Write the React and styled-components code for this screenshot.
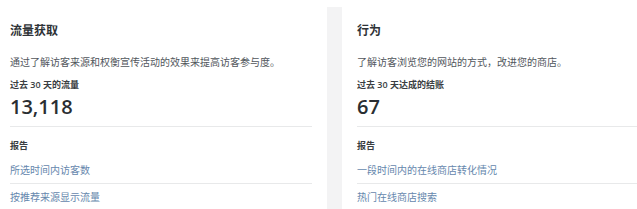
import React from "react";
import styled, { createGlobalStyle } from "styled-components";

const cards = [
  {
    title: "流量获取",
    description: "通过了解访客来源和权衡宣传活动的效果来提高访客参与度。",
    metricLabel: "过去 30 天的流量",
    metric: "13,118",
    reports: ["所选时间内访客数", "按推荐来源显示流量"],
  },
  {
    title: "行为",
    description: "了解访客浏览您的网站的方式，改进您的商店。",
    metricLabel: "过去 30 天达成的结账",
    metric: "67",
    reports: ["一段时间内的在线商店转化情况", "热门在线商店搜索"],
  },
];

const GlobalStyle = createGlobalStyle`
  body {
    margin: 0;
    background: #ffffff;
    font-family: "Open Sans", "Noto Sans CJK SC", sans-serif;
    overflow: hidden;
  }
`;

const Page = styled.div`
  display: flex;
  width: 637px;
  height: 209px;
  overflow: hidden;
`;

const Gutter = styled.div`
  flex: 0 0 15px;
  margin-top: 7px;
  background: #f3f3f4;
`;

const Card = styled.section`
  box-sizing: border-box;
  flex: ${(p) => (p.$first ? "0 0 327px" : "1 1 auto")};
  padding: 22px ${(p) => (p.$first ? "15px" : "0")} 0
    ${(p) => (p.$first ? "10px" : "15px")};
  min-width: 0;
`;

const Title = styled.h2`
  margin: 0;
  font-family: "Noto Sans CJK SC", sans-serif;
  font-size: 12px;
  line-height: 16px;
  font-weight: 700;
  color: #2e3236;
`;

const Description = styled.p`
  margin: 17px 0 0;
  font-family: "Noto Sans CJK SC", sans-serif;
  font-size: 10px;
  line-height: 14px;
  color: #51565c;
  white-space: nowrap;
`;

const MetricBlock = styled.div`
  padding-bottom: 7px;
  border-bottom: 1px solid #e8e9ea;
`;

const MetricLabel = styled.div`
  margin-top: 10px;
  font-family: "Open Sans", "Noto Sans CJK SC", sans-serif;
  font-size: 9px;
  line-height: 12px;
  font-weight: 600;
  color: #3a3e42;
`;

const Metric = styled.div`
  margin-top: 4px;
  font-family: "Open Sans", sans-serif;
  font-size: 20px;
  line-height: 24px;
  font-weight: 600;
  color: #2a2e32;
`;

const SectionLabel = styled.div`
  margin-top: 13px;
  font-family: "Noto Sans CJK SC", sans-serif;
  font-size: 9px;
  line-height: 12px;
  font-weight: 700;
  color: #3a3e42;
`;

const ReportList = styled.ul`
  list-style: none;
  margin: 5px 0 0;
  padding: 0;
`;

const ReportItem = styled.li`
  padding: 6px 0;
  font-family: "Noto Sans CJK SC", sans-serif;
  font-size: 10px;
  line-height: 14px;
  color: #6687ad;
  & + & {
    border-top: 1px solid #e8e9ea;
  }
`;

const App = () => {
  return (
    <>
      <GlobalStyle />
      <Page>
        {cards.map((card, i) => (
          <React.Fragment key={card.title}>
            {i > 0 && <Gutter />}
            <Card $first={i === 0}>
              <Title>{card.title}</Title>
              <Description>{card.description}</Description>
              <MetricBlock>
                <MetricLabel>{card.metricLabel}</MetricLabel>
                <Metric>{card.metric}</Metric>
              </MetricBlock>
              <SectionLabel>报告</SectionLabel>
              <ReportList>
                {card.reports.map((r) => (
                  <ReportItem key={r}>{r}</ReportItem>
                ))}
              </ReportList>
            </Card>
          </React.Fragment>
        ))}
      </Page>
    </>
  );
};

export default App;
